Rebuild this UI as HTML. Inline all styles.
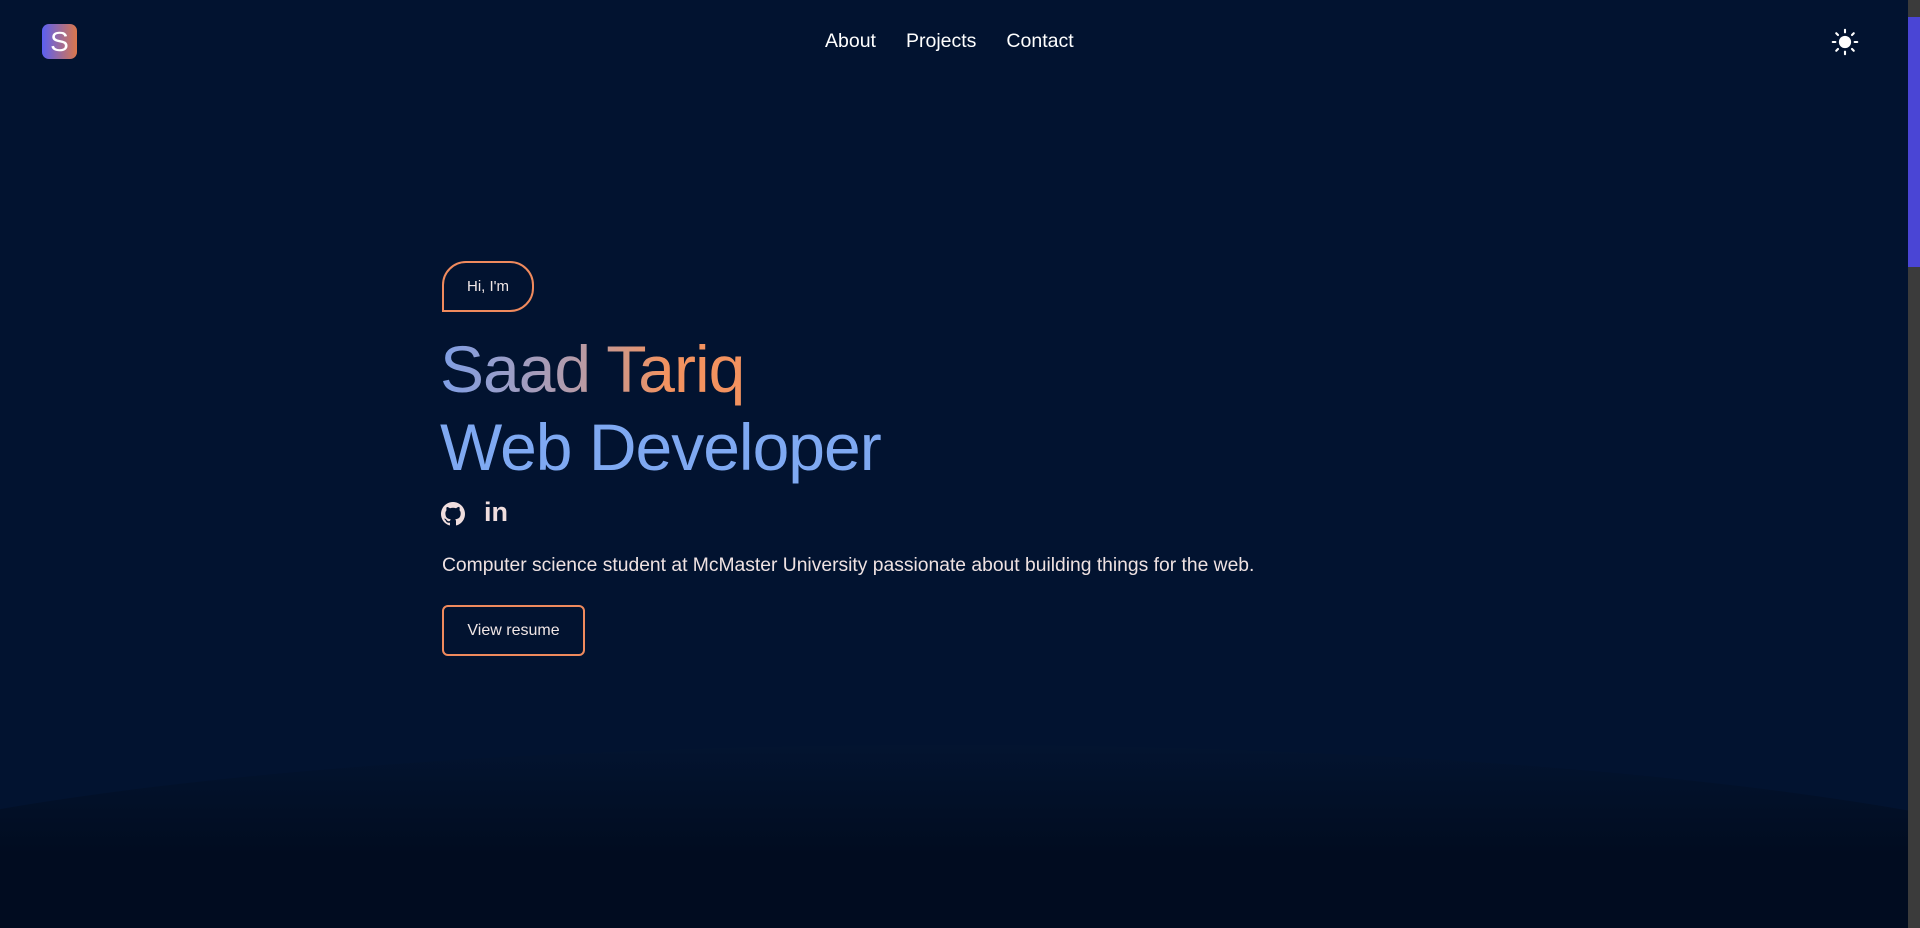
<!DOCTYPE html>
<html><head><meta charset="utf-8"><style>
html,body{margin:0;padding:0;width:1920px;height:928px;overflow:hidden}
body{background:#021330;font-family:"Liberation Sans",sans-serif;position:relative;color:#fff}
.wrap{position:absolute;left:0;top:0;width:1920px;height:928px;overflow:hidden}
.wave{position:absolute;left:-300px;top:745px;width:2500px;height:183px;border-radius:50% 50% 0 0/100% 100% 0 0;background:linear-gradient(#031430,#010c20 60%)}
.logo{position:absolute;left:42px;top:24px;width:35px;height:35px;border-radius:7px;background:linear-gradient(90deg,#5a5ff2,#db774b);color:#fff;font-size:28px;text-align:center;line-height:35px}
.nav{position:absolute;top:30px;left:825px;font-size:19.5px;color:#fff;white-space:nowrap}
.nav span{margin-right:30px}
.scroll{position:absolute;right:0;top:0;width:12px;height:928px;background:#3b3b3b}
.thumb{position:absolute;right:0;top:17px;width:12px;height:250px;background:#4a45d5}
.pill{position:absolute;left:442px;top:261px;width:88px;height:47px;border:2px solid #f08a5d;border-radius:24px 24px 24px 0;font-size:15px;line-height:47px;text-align:center;color:#f0e6e6}
.name{position:absolute;left:440px;top:331px;font-size:66px;letter-spacing:-1px;background:linear-gradient(90deg,#7f9fe6,#b59ba8 45%,#f3925f 75%);-webkit-background-clip:text;background-clip:text;color:transparent;white-space:nowrap}
.role{position:absolute;left:440px;top:409px;font-size:66px;letter-spacing:-1px;color:#7fa9f2;white-space:nowrap}
.p{position:absolute;left:442px;top:555px;font-size:19.3px;color:#efe2e2;white-space:nowrap}
.btn{position:absolute;left:442px;top:605px;width:139px;height:47px;border:2px solid #f08a5d;border-radius:6px;font-size:16px;line-height:47px;text-align:center;color:#f0e6e6}
</style></head><body>
<div class="wrap"><div class="wave"></div></div>
<div class="logo">S</div>
<div class="nav"><span>About</span><span>Projects</span><span style="margin:0">Contact</span></div>
<svg style="position:absolute;left:1831px;top:28px" width="28" height="28" viewBox="0 0 32 32"><circle cx="16" cy="16" r="7" fill="#fff"/><g stroke="#fff" stroke-width="2.4" stroke-linecap="round"><line x1="16" y1="2" x2="16" y2="5"/><line x1="16" y1="27" x2="16" y2="30"/><line x1="2" y1="16" x2="5" y2="16"/><line x1="27" y1="16" x2="30" y2="16"/><line x1="6" y1="6" x2="8" y2="8"/><line x1="24" y1="24" x2="26" y2="26"/><line x1="6" y1="26" x2="8" y2="24"/><line x1="24" y1="8" x2="26" y2="6"/></g></svg>
<div class="pill">Hi, I'm</div>
<div class="name">Saad Tariq</div>
<div class="role">Web Developer</div>
<svg style="position:absolute;left:441px;top:502px" width="24" height="24" viewBox="0 0 16 16"><path fill="#f0dede" d="M8 0C3.58 0 0 3.58 0 8c0 3.54 2.29 6.53 5.47 7.59.4.07.55-.17.55-.38 0-.19-.01-.82-.01-1.49-2.01.37-2.53-.49-2.69-.94-.09-.23-.48-.94-.82-1.13-.28-.15-.68-.52-.01-.53.63-.01 1.08.58 1.23.82.72 1.21 1.87.87 2.33.66.07-.52.28-.87.51-1.07-1.78-.2-3.64-.89-3.64-3.95 0-.87.31-1.59.82-2.15-.08-.2-.36-1.02.08-2.12 0 0 .67-.21 2.2.82.64-.18 1.32-.27 2-.27.68 0 1.36.09 2 .27 1.53-1.04 2.2-.82 2.2-.82.44 1.1.16 1.92.08 2.12.51.56.82 1.27.82 2.15 0 3.07-1.87 3.75-3.65 3.95.29.25.54.73.54 1.48 0 1.07-.01 1.93-.01 2.2 0 .21.15.46.55.38A8.013 8.013 0 0016 8c0-4.42-3.58-8-8-8z"/></svg>
<div style="position:absolute;left:484px;top:497px;font-size:27px;font-weight:bold;color:#f0dede">in</div>
<div class="p">Computer science student at McMaster University passionate about building things for the web.</div>
<div class="btn">View resume</div>
<div class="scroll"></div><div class="thumb"></div>
</body></html>
